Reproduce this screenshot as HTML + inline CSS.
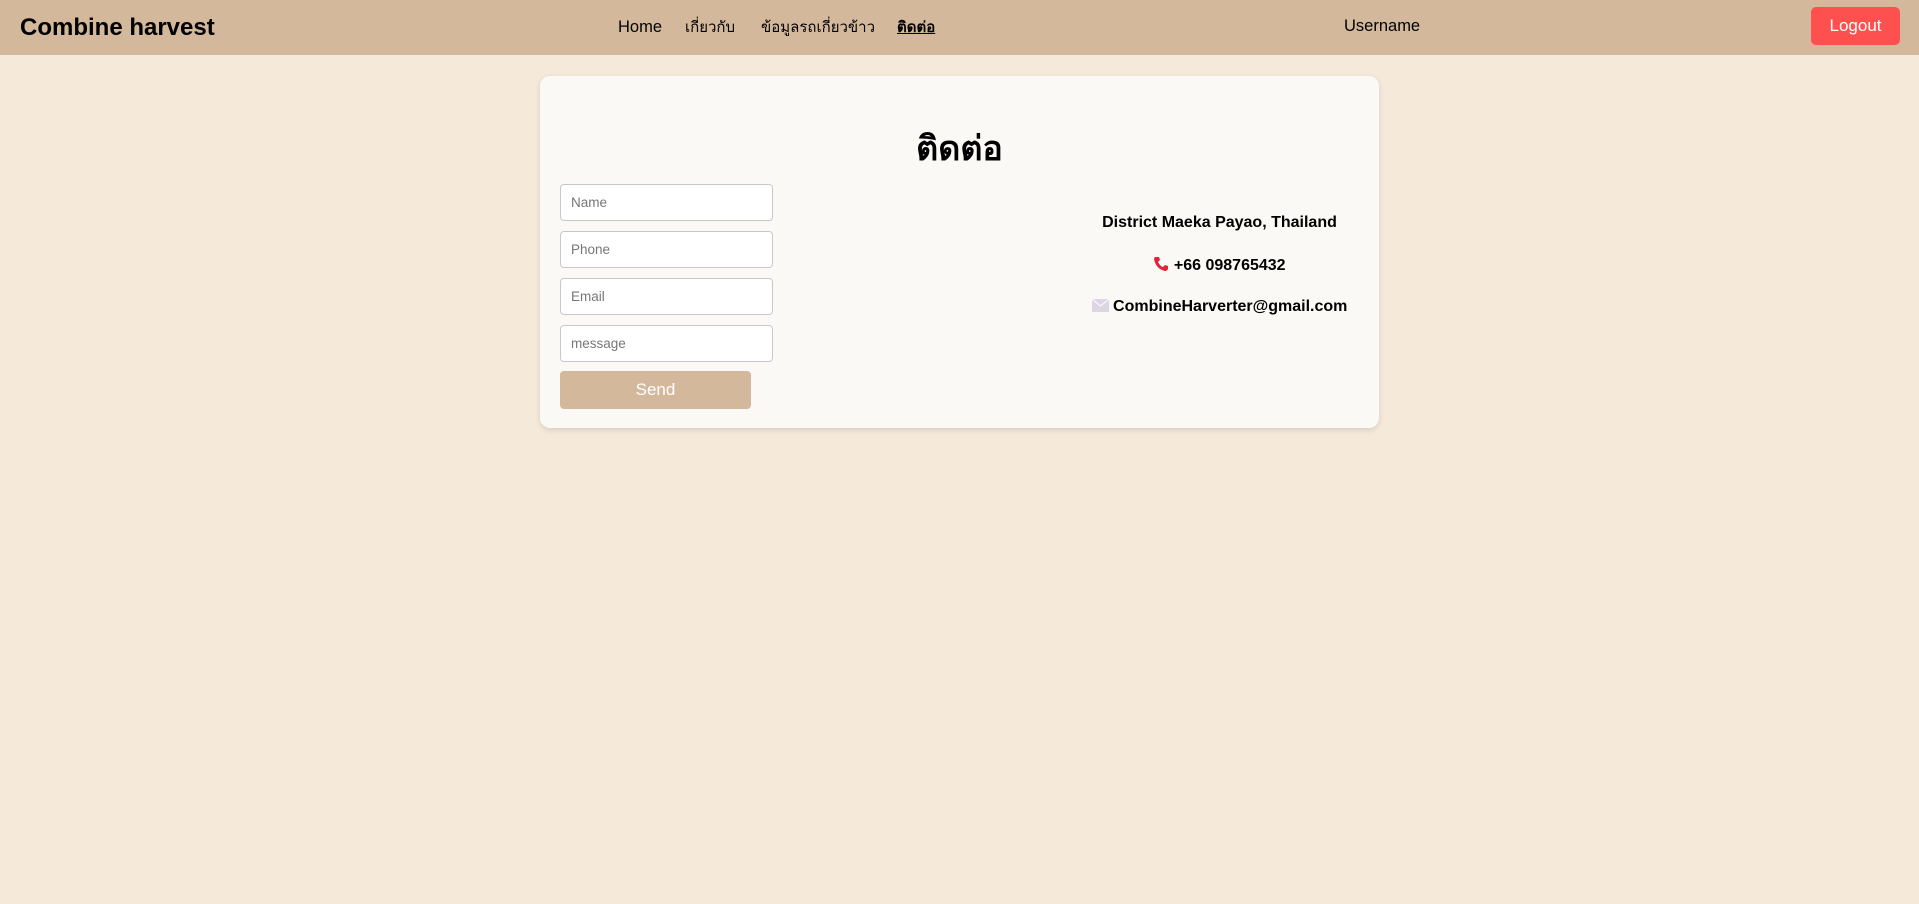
<!DOCTYPE html>
<html><head><meta charset="utf-8"><style>
*{box-sizing:border-box;margin:0;padding:0}
body{width:1919px;height:904px;background:#f5e9da;font-family:"Liberation Sans","Noto Sans CJK SC",sans-serif;position:relative;overflow:hidden}
.nav{position:absolute;left:0;top:0;width:1919px;height:55px;background:#d4b89c}
.brand{position:absolute;left:20px;top:14px;font-size:24px;font-weight:bold;color:#000}
.links{position:absolute;top:18px;font-size:16.5px;color:#000;white-space:nowrap}
.th{font-size:15px;top:15px}
.user{position:absolute;left:1344px;top:17px;font-size:16.5px}
.logout{position:absolute;left:1811px;top:7px;width:89px;height:38px;background:#ff5050;border-radius:5px;color:#fff;font-size:17px;text-align:center;line-height:38px}
.card{position:absolute;left:540px;top:76px;width:839px;height:352px;background:#fbf9f5;border-radius:10px;box-shadow:0 2px 6px rgba(0,0,0,.12)}
h1{position:absolute;left:0;width:100%;text-align:center;top:45px;font-size:34px;font-weight:bold}
.in{position:absolute;left:20px;width:213px;height:37px;border:1px solid #c8c8c8;border-radius:4px;background:#fff;font-size:13.5px;color:#777;padding:10px 10px}
.send{position:absolute;left:20px;top:295px;width:191px;height:38px;background:#d4b89c;border-radius:4px;color:#fff;text-align:center;line-height:38px;font-size:17px}
.info{position:absolute;left:460px;width:439px;text-align:center;font-size:16px;font-weight:bold}
</style></head><body>
<div class="nav">
<div class="brand">Combine harvest</div>
<div class="links" style="left:618px">Home</div>
<div class="links th" style="left:685px">เกี่ยวกับ</div>
<div class="links th" style="left:761px">ข้อมูลรถเกี่ยวข้าว</div>
<div class="links th" style="left:897px;font-weight:bold;text-decoration:underline">ติดต่อ</div>
<div class="user">Username</div>
<div class="logout">Logout</div>
</div>
<div class="card">
<h1>ติดต่อ</h1>
<div class="in" style="top:108px">Name</div>
<div class="in" style="top:155px">Phone</div>
<div class="in" style="top:202px">Email</div>
<div class="in" style="top:249px">message</div>
<div class="send">Send</div>
<div class="info" style="top:138px">District Maeka Payao, Thailand</div>
<div class="info" style="top:180px"><svg width="16" height="16" viewBox="0 0 16 16" style="vertical-align:-2px"><path d="M3 1 L6 1 L7 4 L5 6 Q7 10 10 11 L12 9 L15 10 L15 13 Q14 15 12 15 Q3 13 1 3 Q1 1 3 1Z" fill="#e0243c"/></svg> +66 098765432</div>
<div class="info" style="top:222px"><svg width="17" height="13" style="vertical-align:-1px"><rect width="17" height="13" fill="#dcd6e4"/><path d="M0 0 L8.5 7 L17 0" stroke="#fff" fill="none"/></svg> CombineHarverter@gmail.com</div>
</div>
</body></html>
